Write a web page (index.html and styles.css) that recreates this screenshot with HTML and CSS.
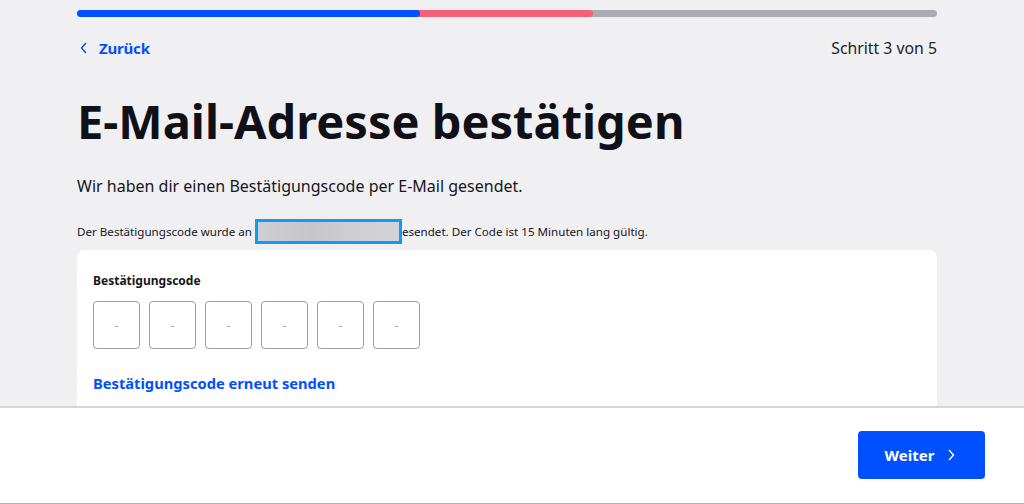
FILE: index.html
```html
<!DOCTYPE html>
<html lang="de">
<head>
<meta charset="utf-8">
<title>E-Mail-Adresse bestätigen</title>
<link rel="stylesheet" href="styles.css">
</head>
<body>
<div class="page">
  <main class="content">
    <div class="progress">
      <div class="seg seg-done"></div>
      <div class="seg seg-current"></div>
      <div class="seg seg-todo"></div>
    </div>
    <div class="nav">
      <a class="back" href="#">
        <svg width="10" height="12" viewBox="0 0 10 12"><path d="M7 1 L2.5 6 L7 11" fill="none" stroke="#0050ff" stroke-width="1.4"/></svg>
        <span>Zurück</span>
      </a>
      <span class="step">Schritt 3 von 5</span>
    </div>
    <h1 class="title">E-Mail-Adresse bestätigen</h1>
    <p class="lead">Wir haben dir einen Bestätigungscode per E-Mail gesendet.</p>
    <p class="note">Der Bestätigungscode wurde an <span class="email"></span>esendet. Der Code ist 15 Minuten lang gültig.</p>
    <section class="card">
      <div class="label">Bestätigungscode</div>
      <div class="code-row">
        <div class="code-box">-</div>
        <div class="code-box">-</div>
        <div class="code-box">-</div>
        <div class="code-box">-</div>
        <div class="code-box">-</div>
        <div class="code-box">-</div>
      </div>
      <a class="resend" href="#">Bestätigungscode erneut senden</a>
    </section>
  </main>
  <footer class="footer">
    <button class="next">Weiter
      <svg width="10" height="14" viewBox="0 0 10 14"><path d="M3 2 L7.5 7 L3 12" fill="none" stroke="#ffffff" stroke-width="1.4"/></svg>
    </button>
  </footer>
</div>
</body>
</html>
```
FILE: styles.css
```css
* { box-sizing: border-box; }
html, body { margin: 0; padding: 0; }
body {
  background: #f0f0f2;
  font-family: "Noto Sans", "Open Sans", sans-serif;
  color: #16161c;
  width: 1024px;
  height: 504px;
  overflow: hidden;
}
.page {
  display: flex;
  flex-direction: column;
  height: 504px;
}
.content {
  flex: 1;
  overflow: hidden;
  padding: 10px 87px 0 77px;
  display: flex;
  flex-direction: column;
}
.progress {
  display: flex;
  height: 7px;
  border-radius: 4px;
  overflow: hidden;
  width: 860px;
}
.seg-done { width: 343px; background: #0050ff; border-radius: 0 4px 4px 0; position: relative; z-index: 1; }
.seg-current { width: 177px; background: #f45f79; margin-left: -4px; padding-left: 4px; border-radius: 0 4px 4px 0; position: relative; z-index: 0; }
.seg-todo { flex: 1; background: #acabb3; margin-left: -4px; }
.nav {
  display: flex;
  justify-content: space-between;
  align-items: center;
  margin-top: 20px;
  width: 860px;
  height: 22px;
}
.back {
  display: flex;
  align-items: center;
  gap: 10px;
  color: #0050ff;
  text-decoration: none;
  font-weight: 700;
  font-size: 15px;
  padding-left: 2px;
  letter-spacing: -0.2px;
}
.step { font-size: 15.8px; color: #222228; }
.title {
  font-size: 47px;
  font-weight: 700;
  margin: 34px 0 0 0;
  line-height: 56px;
  letter-spacing: 0;
  color: #101018;
}
.lead {
  font-size: 16px;
  margin: 27px 0 0 0;
  line-height: 20px;
}
.note {
  font-size: 11.6px;
  margin: 23px 0 0 0;
  line-height: 24px;
  display: flex;
  align-items: center;
  white-space: pre;
}
.email {
  display: inline-block;
  width: 147px;
  height: 25px;
  border: 3px solid #0a9cf7;
  background: linear-gradient(90deg, #cfcfd3, #c6c6ca 40%, #cdcdd1 60%, #d4d4d8);
}
.card {
  background: #ffffff;
  border-radius: 8px 8px 0 0;
  margin-top: 6px;
  width: 860px;
  padding: 23px 16px 0 16px;
  flex: 1;
}
.label {
  font-size: 12px;
  font-weight: 700;
  line-height: 16px;
}
.code-row {
  display: flex;
  gap: 9px;
  margin-top: 12px;
}
.code-box {
  width: 47px;
  height: 48px;
  border: 1px solid #9c9ca2;
  border-radius: 4px;
  display: flex;
  align-items: center;
  justify-content: center;
  color: #a0a0a6;
  font-size: 12px;
}
.resend {
  display: block;
  margin-top: 24px;
  color: #0050ff;
  font-weight: 700;
  font-size: 14.7px;
  text-decoration: none;
}
.footer {
  height: 98px;
  background: #ffffff;
  border-top: 2px solid #d6d6da;
  border-bottom: 1px solid #b4b4b8;
  display: flex;
  justify-content: flex-end;
  align-items: flex-start;
  padding: 23px 39px 0 0;
}
.next {
  width: 127px;
  height: 48px;
  background: #0050ff;
  border: none;
  border-radius: 4px;
  color: #ffffff;
  font-family: inherit;
  font-weight: 700;
  font-size: 15px;
  display: flex;
  align-items: center;
  justify-content: center;
  gap: 12px;
  padding-left: 4px;
}
```
